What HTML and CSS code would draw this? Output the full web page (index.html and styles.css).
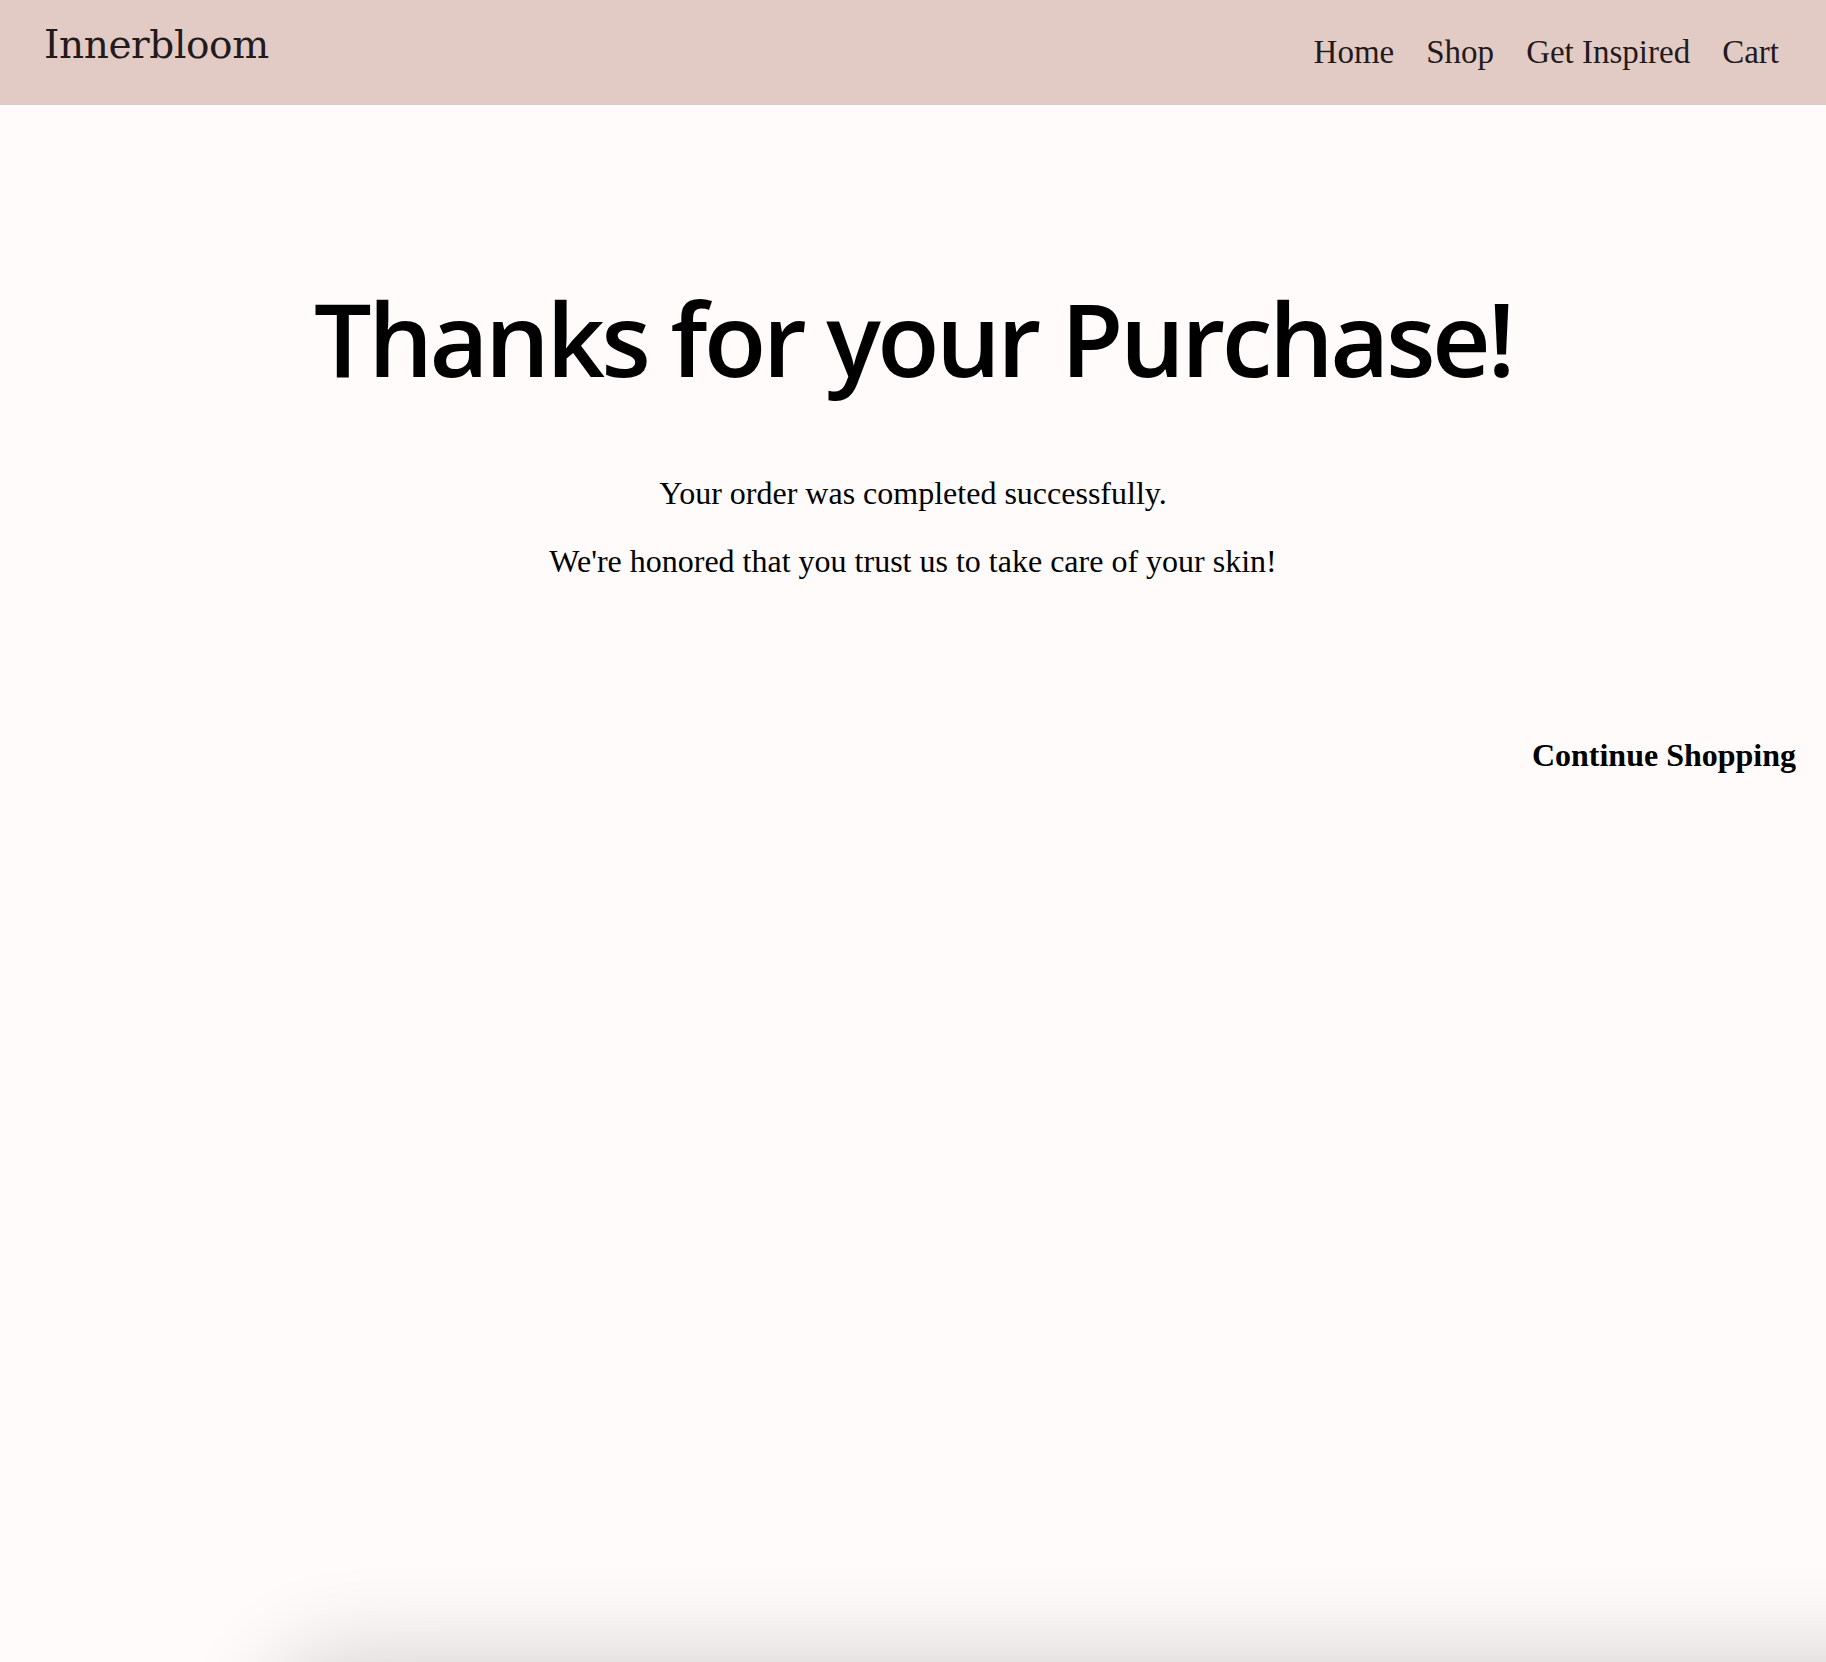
FILE: index.html
```html
<!DOCTYPE html>
<html lang="en">
<head>
<meta charset="utf-8">
<title>Innerbloom - Thank you</title>
<link rel="stylesheet" href="styles.css">
</head>
<body>
<header class="site-header">
  <a class="logo" href="#">Innerbloom</a>
  <nav class="nav">
    <a href="#">Home</a>
    <a href="#">Shop</a>
    <a href="#">Get Inspired</a>
    <a href="#">Cart</a>
  </nav>
</header>
<main class="content">
  <h1 class="title">Thanks for your Purchase!</h1>
  <p class="msg">Your order was completed successfully.</p>
  <p class="msg">We're honored that you trust us to take care of your skin!</p>
  <div class="actions"><a class="continue" href="#">Continue Shopping</a></div>
</main>
<div class="edge-shadow"></div>
</body>
</html>
```
FILE: styles.css
```css
html, body {
  margin: 0;
  padding: 0;
}
body {
  background: #fffbfa;
  font-family: "Liberation Serif", "Times New Roman", serif;
  color: #000;
  min-height: 1662px;
  overflow: hidden;
}
a {
  color: inherit;
  text-decoration: none;
}
.site-header {
  display: flex;
  justify-content: space-between;
  align-items: flex-start;
  height: 105px;
  box-sizing: border-box;
  padding: 0 47px 0 44px;
  background: #e2cbc5;
  color: #231a1c;
}
.logo {
  font-family: "DejaVu Serif", "Liberation Serif", serif;
  font-size: 39px;
  letter-spacing: -0.4px;
  line-height: 1;
  margin-top: 25px;
}
.nav {
  display: flex;
  gap: 32px;
  margin-top: 36px;
  font-family: "Liberation Serif", serif;
  font-size: 33px;
  line-height: 1;
}
.content {
  text-align: center;
}
.title {
  font-family: "Open Sans", sans-serif;
  font-weight: 600;
  font-size: 102px;
  letter-spacing: -3.5px;
  line-height: 1;
  margin: 182px 0 85px;
}
.msg {
  font-size: 32px;
  line-height: 1.2;
  margin: 0 0 30px;
}
.actions {
  text-align: right;
  padding-right: 30px;
  margin-top: 156px;
}
.continue {
  font-weight: bold;
  font-size: 32px;
}
.edge-shadow {
  position: fixed;
  left: 280px;
  right: -200px;
  bottom: -140px;
  height: 140px;
  box-shadow: 0 0 90px 10px rgba(0, 0, 0, 0.16);
  border-radius: 60px;
}
```
